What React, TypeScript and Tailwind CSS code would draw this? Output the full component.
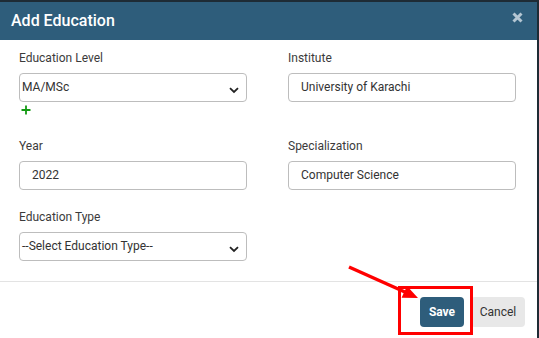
import React from 'react';

function Chevron() {
  return (
    <svg width="10" height="7" viewBox="0 0 10 7" className="absolute right-[7px] top-[13px]">
      <path d="M1 1.2 L5 5 L9 1.2" fill="none" stroke="#222" strokeWidth="1.8" />
    </svg>
  );
}

function Field({ label, children }: { label: string; children: React.ReactNode }) {
  return (
    <div className="flex flex-col">
      <label className="text-[12px] leading-[16px] text-[#3b3b3b]">{label}</label>
      <div className="mt-[7px]">{children}</div>
    </div>
  );
}

function SelectBox({ value }: { value: string }) {
  return (
    <div className="relative h-[29px] rounded-[4px] border border-[#bdbdbd] bg-white pl-[2px] text-[12px] leading-[26px] text-[#333]">
      {value}
      <Chevron />
    </div>
  );
}

function InputBox({ value }: { value: string }) {
  return (
    <div className="h-[29px] rounded-[4px] border border-[#bdbdbd] bg-white px-[12px] text-[12px] leading-[27px] text-[#333]">
      {value}
    </div>
  );
}

export default function App() {
  return (
    <div className="h-[338px] w-[539px] overflow-hidden bg-[#1e2b35] pt-[2px]" style={{ fontFamily: 'Roboto, "Liberation Sans", sans-serif' }}>
      <div className="relative h-[336px] w-[537px] bg-white">
        <div className="flex h-[38px] items-center justify-between bg-[#2e5d7b] pl-[11px] pr-[14px]">
          <h3 className="text-[16px] font-medium text-white">Add Education</h3>
          <svg width="11" height="11" viewBox="0 0 11 11" className="mb-[8px]">
            <path d="M1.5 1.5 L9.5 9.5 M9.5 1.5 L1.5 9.5" stroke="#b4c6d3" strokeWidth="3" />
          </svg>
        </div>

        <div className="grid h-[241px] grid-cols-[228px_228px] gap-x-[41px] px-[19px] pt-[10px]">
          <div className="flex flex-col">
            <Field label="Education Level">
              <SelectBox value="MA/MSc" />
            </Field>
            <svg width="10" height="10" viewBox="0 0 10 10" className="ml-[2px] mt-[3px]">
              <path d="M5 0.5 V9.5 M0.5 5 H9.5" stroke="#139a13" strokeWidth="1.8" />
            </svg>
            <div className="mt-[23px]">
              <Field label="Year">
                <InputBox value="2022" />
              </Field>
            </div>
            <div className="mt-[19px]">
              <Field label="Education Type">
                <SelectBox value="--Select Education Type--" />
              </Field>
            </div>
          </div>
          <div className="flex flex-col">
            <Field label="Institute">
              <InputBox value="University of Karachi" />
            </Field>
            <div className="mt-[36px]">
              <Field label="Specialization">
                <InputBox value="Computer Science" />
              </Field>
            </div>
          </div>
        </div>

        <div className="flex justify-end gap-[7px] border-t border-[#e3e3e3] pr-[12px] pt-[15px]">
          <button className="h-[30px] w-[44px] rounded-[4px] bg-[#2e5d7b] text-[12px] font-bold text-white">Save</button>
          <button className="h-[30px] w-[54px] rounded-[4px] bg-[#e8e8e8] text-[12px] text-[#333]">Cancel</button>
        </div>

        <div className="absolute left-[398px] top-[284px] h-[49px] w-[75px] border-[3px] border-[#ff0000]" />
        <svg className="absolute left-0 top-0" width="537" height="336" viewBox="0 0 537 336">
          <line x1="349" y1="265" x2="406" y2="290.5" stroke="#ff0000" strokeWidth="3.5" />
          <path d="M418 296 L401.6 295.8 L407 283.9 Z" fill="#ff0000" />
        </svg>
      </div>
    </div>
  );
}
